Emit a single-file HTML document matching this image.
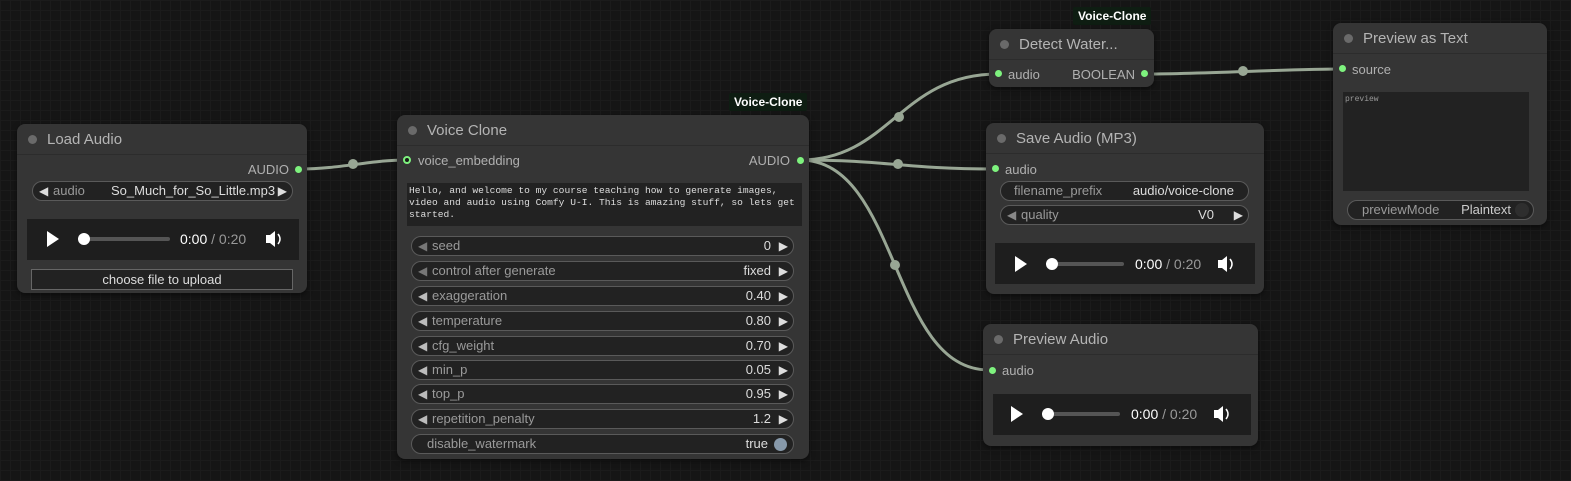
<!DOCTYPE html>
<html><head><meta charset="utf-8"><style>
*{box-sizing:border-box;margin:0;padding:0}
body{width:1571px;height:481px;overflow:hidden;background-color:#151515;
background-image:linear-gradient(#1b1b1b 1px,transparent 1px),linear-gradient(90deg,#1b1b1b 1px,transparent 1px);
background-size:10px 10px;font-family:"Liberation Sans",sans-serif;position:relative}
.n{position:absolute;background:#353535;border-radius:8px;box-shadow:0 2px 6px rgba(0,0,0,.5)}
.t{height:31px;border-bottom:1px solid #2c2c2c;color:#b4b4b4;font-size:15px;line-height:31px;padding-left:30px;position:relative}
.t:before{content:"";position:absolute;left:11px;top:11px;width:9px;height:9px;border-radius:50%;background:#6a6a6a}
.a{position:absolute;font-size:13px;color:#b0b0b0}
.d{position:absolute;width:7px;height:7px;border-radius:50%;background:#7ef27e}
.w{position:absolute;height:20px;border:1px solid #5a5a5a;border-radius:10px;background:#222;font-size:13px;line-height:18px;color:#9a9a9a}
.w .l{position:absolute;left:20px}
.w .v{position:absolute;right:22px;color:#dcdcdc}
.w .al{position:absolute;left:6px;color:#bbb;font-size:12px}
.w .ar{position:absolute;right:5px;color:#ddd;font-size:12px}
.p{position:absolute;background:#1e1e1e}
.badge{position:absolute;background:#0e1d12;color:#fff;font-size:12px;padding:2px 5px;font-weight:bold;border-radius:2px}
</style></head><body>
<svg width="1571" height="481" style="position:absolute;left:0;top:0">
<g stroke="#98a694" stroke-width="3" fill="none">
<path d="M300 169 C340 169 370 160 406 160"/>
<path d="M800 160 C890 160 900 74 998 74"/>
<path d="M800 160 C890 160 900 169 995 169"/>
<path d="M800 160 C900 160 890 370 989 370"/>
<path d="M1144 74 C1200 74 1290 69 1343 69"/>
</g>
<g fill="#98a694"><circle cx="353" cy="164" r="5"/><circle cx="899" cy="117" r="5"/><circle cx="898" cy="164" r="5"/><circle cx="895" cy="265" r="5"/><circle cx="1243" cy="71" r="5"/></g>
</svg>

<!-- Load Audio -->
<div class="n" style="left:17px;top:124px;width:290px;height:169px">
<div class="t">Load Audio</div>
<div class="a" style="right:18px;top:38px">AUDIO</div>
<div class="d" style="right:5px;top:42px"></div>
<div class="w" style="left:15px;top:57px;width:261px;line-height:18px"><span class="al" style="color:#ddd">◀</span><span class="l" style="left:20px;color:#9a9a9a">audio</span><span style="position:absolute;left:78px;color:#ddd">So_Much_for_So_Little.mp3</span><span class="ar">▶</span></div>
<div class="p" style="left:10px;top:95px;width:272px;height:41px"></div>
<div style="position:absolute;left:14px;top:145px;width:262px;height:21px;border:1px solid #666;background:#222;color:#ddd;font-size:13px;text-align:center;line-height:19px">choose file to upload</div>
</div>

<!-- Voice Clone -->
<div class="badge" style="left:729px;top:93px">Voice-Clone</div>
<div class="n" style="left:397px;top:115px;width:412px;height:344px">
<div class="t">Voice Clone</div>
<div class="d" style="left:6px;top:41px;background:#1a1a1a;border:2px solid #7ef27e;width:8px;height:8px"></div>
<div class="a" style="left:21px;top:38px">voice_embedding</div>
<div class="a" style="right:19px;top:38px">AUDIO</div>
<div class="d" style="right:5px;top:42px"></div>
<div style="position:absolute;left:10px;top:68px;width:395px;height:43px;background:#222;color:#ddd;font-family:'Liberation Mono',monospace;font-size:9.6px;line-height:12px;padding:2px 2px">Hello, and welcome to my course teaching how to generate images, video and audio using Comfy U-I. This is amazing stuff, so lets get started.</div>
<div class="w" style="left:14px;top:121px;width:383px"><span class="al" style="color:#777">◀</span><span class="l">seed</span><span class="v">0</span><span class="ar">▶</span></div>
<div class="w" style="left:14px;top:146px;width:383px"><span class="al" style="color:#777">◀</span><span class="l">control after generate</span><span class="v">fixed</span><span class="ar">▶</span></div>
<div class="w" style="left:14px;top:171px;width:383px"><span class="al">◀</span><span class="l">exaggeration</span><span class="v">0.40</span><span class="ar">▶</span></div>
<div class="w" style="left:14px;top:196px;width:383px"><span class="al">◀</span><span class="l">temperature</span><span class="v">0.80</span><span class="ar">▶</span></div>
<div class="w" style="left:14px;top:221px;width:383px"><span class="al">◀</span><span class="l">cfg_weight</span><span class="v">0.70</span><span class="ar">▶</span></div>
<div class="w" style="left:14px;top:245px;width:383px"><span class="al">◀</span><span class="l">min_p</span><span class="v">0.05</span><span class="ar">▶</span></div>
<div class="w" style="left:14px;top:269px;width:383px"><span class="al">◀</span><span class="l">top_p</span><span class="v">0.95</span><span class="ar">▶</span></div>
<div class="w" style="left:14px;top:294px;width:383px"><span class="al">◀</span><span class="l">repetition_penalty</span><span class="v">1.2</span><span class="ar">▶</span></div>
<div class="w" style="left:14px;top:319px;width:383px"><span class="l" style="left:15px">disable_watermark</span><span class="v" style="right:25px">true</span><span style="position:absolute;right:6px;top:3px;width:13px;height:13px;border-radius:50%;background:#8799aa"></span></div>
</div>

<!-- Detect Watermark -->
<div class="badge" style="left:1073px;top:7px">Voice-Clone</div>
<div class="n" style="left:989px;top:29px;width:165px;height:58px">
<div class="t" style="height:31px">Detect Water...</div>
<div class="d" style="left:6px;top:41px"></div>
<div class="a" style="left:19px;top:38px">audio</div>
<div class="a" style="right:19px;top:38px">BOOLEAN</div>
<div class="d" style="right:6px;top:41px"></div>
</div>

<!-- Preview as Text -->
<div class="n" style="left:1333px;top:23px;width:214px;height:202px">
<div class="t">Preview as Text</div>
<div class="d" style="left:6px;top:42px"></div>
<div class="a" style="left:19px;top:39px">source</div>
<div style="position:absolute;left:10px;top:69px;width:186px;height:99px;background:#222;color:#999;font-family:'Liberation Mono',monospace;font-size:8px;padding:3px 2px">preview</div>
<div class="w" style="left:14px;top:177px;width:187px"><span class="l" style="left:14px">previewMode</span><span class="v" style="right:22px;color:#ccc">Plaintext</span><span style="position:absolute;right:4px;top:2px;width:14px;height:14px;border-radius:50%;background:#2e2e2e"></span></div>
</div>

<!-- Save Audio -->
<div class="n" style="left:986px;top:123px;width:278px;height:171px">
<div class="t">Save Audio (MP3)</div>
<div class="d" style="left:6px;top:42px"></div>
<div class="a" style="left:19px;top:39px">audio</div>
<div class="w" style="left:14px;top:58px;width:249px"><span class="l" style="left:13px">filename_prefix</span><span class="v" style="right:14px">audio/voice-clone</span></div>
<div class="w" style="left:14px;top:82px;width:249px"><span class="al" style="color:#888">◀</span><span class="l">quality</span><span class="v" style="right:34px">V0</span><span class="ar">▶</span></div>
<div class="p" style="left:9px;top:120px;width:260px;height:41px"></div>
</div>

<!-- Preview Audio -->
<div class="n" style="left:983px;top:324px;width:275px;height:122px">
<div class="t">Preview Audio</div>
<div class="d" style="left:6px;top:43px"></div>
<div class="a" style="left:19px;top:39px">audio</div>
<div class="p" style="left:10px;top:70px;width:258px;height:41px"></div>
</div>

<!-- players -->
<svg width="1571" height="481" style="position:absolute;left:0;top:0">
<g font-family="Liberation Sans" font-size="14">
<g transform="translate(0,0)">
<path d="M47 231 L59 239 L47 247Z" fill="#fff"/><rect x="78" y="237" width="92" height="4" rx="2" fill="#555"/><circle cx="84" cy="239" r="6" fill="#fff"/>
<text x="180" y="244" fill="#fff">0:00 <tspan fill="#999">/ 0:20</tspan></text>
<path d="M266 235 h4 l5 -4 v16 l-5 -4 h-4z" fill="#fff"/><path d="M278 234 q4 5 0 10" stroke="#fff" stroke-width="1.5" fill="none"/>
</g>
<g transform="translate(968,25)">
<path d="M47 231 L59 239 L47 247Z" fill="#fff"/><rect x="78" y="237" width="78" height="4" rx="2" fill="#555"/><circle cx="84" cy="239" r="6" fill="#fff"/>
<text x="167" y="244" fill="#fff">0:00 <tspan fill="#999">/ 0:20</tspan></text>
<path d="M250 235 h4 l5 -4 v16 l-5 -4 h-4z" fill="#fff"/><path d="M262 234 q4 5 0 10" stroke="#fff" stroke-width="1.5" fill="none"/>
</g>
<g transform="translate(964,175)">
<path d="M47 231 L59 239 L47 247Z" fill="#fff"/><rect x="78" y="237" width="78" height="4" rx="2" fill="#555"/><circle cx="84" cy="239" r="6" fill="#fff"/>
<text x="167" y="244" fill="#fff">0:00 <tspan fill="#999">/ 0:20</tspan></text>
<path d="M250 235 h4 l5 -4 v16 l-5 -4 h-4z" fill="#fff"/><path d="M262 234 q4 5 0 10" stroke="#fff" stroke-width="1.5" fill="none"/>
</g>
</g>
</svg>
</body></html>
